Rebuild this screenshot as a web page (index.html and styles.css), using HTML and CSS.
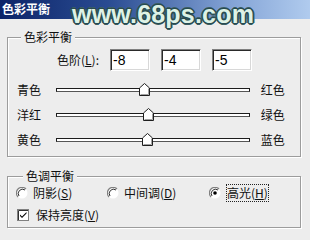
FILE: index.html
```html
<!DOCTYPE html>
<html>
<head>
    <title>色彩平衡</title>
    <meta charset="utf-8">
    <link rel="stylesheet" href="styles.css">
</head>
<body>

<div class="titlebar"><span class="title">色彩平衡</span></div>
<div class="watermark">www.68ps.com</div>

<div class="group balance">
    <span class="legend">色彩平衡</span>
    <div class="levels">
        <span class="levels-label">色阶(<u>L</u>):</span>
        <input class="field" type="text" value="-8">
        <input class="field" type="text" value="-4">
        <input class="field" type="text" value="-5">
    </div>
    <div class="slider-row">
        <span class="lbl">青色</span>
        <div class="track"><span class="thumb" style="--v:46%"><svg width="11" height="13" viewBox="0 0 11 13"><polygon points="5.5,0.5 10.5,5 10.5,12.5 0.5,12.5 0.5,5" fill="#fff" stroke="#1e1e1e"/><polyline points="9.5,5.5 9.5,11.5 1.5,11.5" fill="none" stroke="#a0a0a0"/></svg></span></div>
        <span class="lbl right">红色</span>
    </div>
    <div class="slider-row">
        <span class="lbl">洋红</span>
        <div class="track"><span class="thumb" style="--v:48%"><svg width="11" height="13" viewBox="0 0 11 13"><polygon points="5.5,0.5 10.5,5 10.5,12.5 0.5,12.5 0.5,5" fill="#fff" stroke="#1e1e1e"/><polyline points="9.5,5.5 9.5,11.5 1.5,11.5" fill="none" stroke="#a0a0a0"/></svg></span></div>
        <span class="lbl right">绿色</span>
    </div>
    <div class="slider-row">
        <span class="lbl">黄色</span>
        <div class="track"><span class="thumb" style="--v:47.5%"><svg width="11" height="13" viewBox="0 0 11 13"><polygon points="5.5,0.5 10.5,5 10.5,12.5 0.5,12.5 0.5,5" fill="#fff" stroke="#1e1e1e"/><polyline points="9.5,5.5 9.5,11.5 1.5,11.5" fill="none" stroke="#a0a0a0"/></svg></span></div>
        <span class="lbl right">蓝色</span>
    </div>
</div>

<div class="group tone">
    <span class="legend">色调平衡</span>
    <div class="radios">
        <label class="radio">
            <svg width="12" height="12" viewBox="0 0 12 12"><circle cx="6" cy="6" r="5.5" fill="#fff"/><path d="M10 2 A5.5 5.5 0 0 0 2 10" fill="none" stroke="#808080" stroke-width="1.2"/><path d="M9 3 A4.3 4.3 0 0 0 3 9" fill="none" stroke="#303030" stroke-width="1"/></svg>
            <span>阴影(<u>S</u>)</span>
        </label>
        <label class="radio">
            <svg width="12" height="12" viewBox="0 0 12 12"><circle cx="6" cy="6" r="5.5" fill="#fff"/><path d="M10 2 A5.5 5.5 0 0 0 2 10" fill="none" stroke="#808080" stroke-width="1.2"/><path d="M9 3 A4.3 4.3 0 0 0 3 9" fill="none" stroke="#303030" stroke-width="1"/></svg>
            <span>中间调(<u>D</u>)</span>
        </label>
        <label class="radio">
            <svg width="12" height="12" viewBox="0 0 12 12"><circle cx="6" cy="6" r="5.5" fill="#fff"/><path d="M10 2 A5.5 5.5 0 0 0 2 10" fill="none" stroke="#808080" stroke-width="1.2"/><path d="M9 3 A4.3 4.3 0 0 0 3 9" fill="none" stroke="#303030" stroke-width="1"/><circle cx="6" cy="6" r="1.8" fill="#000"/></svg>
            <span class="focus">高光(<u>H</u>)</span>
        </label>
    </div>
    <label class="check">
        <svg width="12" height="12" viewBox="0 0 12 12"><rect x="0.5" y="0.5" width="11" height="11" fill="#fff" stroke="#808080"/><path d="M1.5 11 V1.5 H11" fill="none" stroke="#303030"/><path d="M3 5.5 L5 7.5 L9.5 3 L9.5 4.5 L5 9 L3 7 Z" fill="#000"/></svg>
        <span>保持亮度(<u>V</u>)</span>
    </label>
</div>

</body>
</html>
```

FILE: styles.css
```css
body,html {
    margin: 0; padding: 0;
}
body {
    background: #ededed;
    font-family: "Noto Sans CJK SC", sans-serif;
    font-size: 12px;
    line-height: 16px;
    color: #111;
    position: relative;
    width: 310px;
    height: 240px;
    overflow: hidden;
}
u {
    text-decoration: underline;
    text-underline-offset: 1px;
}
.titlebar {
    height: 19px;
    background: linear-gradient(to right, #0c2468 0%, #2a4c92 35%, #84a4d6 75%, #b0cbee 100%);
    padding-left: 2px;
}
.titlebar > .title {
    color: #fff;
    font-weight: bold;
    line-height: 18px;
    letter-spacing: 0;
}
.watermark {
    position: absolute;
    left: 72px;
    top: 0px;
    font-family: "Liberation Sans", sans-serif;
    font-weight: bold;
    font-size: 25px;
    line-height: 28px;
    letter-spacing: 0.2px;
    color: #def2e6;
    text-shadow:
        -1px -1px 0 #284a50, 1px -1px 0 #284a50,
        -1px 1px 0 #284a50, 1px 1px 0 #284a50,
        0 -2px 0 #3a5e62, 0 2px 0 #3a5e62,
        -2px 0 0 #3a5e62, 2px 0 0 #3a5e62;
}
.group {
    position: relative;
    margin-left: 7px;
    width: 292px;
    border: 1px solid #9c9c9c;
    box-shadow: 1px 1px 0 #fff, inset 1px 1px 0 #fff;
}
.group > .legend {
    position: absolute;
    top: -9px;
    background: #ededed;
    padding: 0 3px;
}
.balance {
    margin-top: 18px;
    padding: 11px 0 4px;
}
.balance > .legend {
    left: 13px;
}
.levels {
    display: flex;
    align-items: center;
    gap: 11px;
    margin-left: 49px;
    height: 22px;
}
.levels > .levels-label {
    width: 42px;
}
.field {
    box-sizing: border-box;
    width: 40px;
    height: 22px;
    margin: 0;
    padding: 0 0 0 2px;
    border: 1px solid;
    border-color: #808080 #fff #fff #808080;
    box-shadow: inset 1px 1px 0 #2a2a2a, inset -1px -1px 0 #d8d8d8;
    background: #fff;
    font-family: "Liberation Sans", sans-serif;
    font-size: 14px;
    color: #000;
    outline: 0 none;
}
.slider-row {
    display: flex;
    align-items: center;
    height: 25px;
    margin-top: 0;
    padding-left: 9px;
}
.balance > .levels + .slider-row {
    margin-top: 6px;
}
.slider-row > .lbl {
    width: 40px;
}
.slider-row > .lbl.right {
    margin-left: 11px;
}
.track {
    position: relative;
    box-sizing: border-box;
    width: 197px;
    height: 4px;
    background: #fff;
    border: 1px solid #1c1c1c;
    border-bottom-color: #555;
}
.thumb {
    position: absolute;
    left: calc(var(--v) - 6px);
    top: -6px;
    width: 11px;
    height: 13px;
}
.thumb > svg {
    display: block;
}
.tone {
    margin-top: 19px;
    padding: 8px 0 4px;
}
.tone > .legend {
    left: 15px;
}
.radios {
    display: grid;
    grid-template-columns: 91px 102px auto;
    padding-left: 8px;
    height: 16px;
}
.radio, .check {
    display: flex;
    align-items: center;
    gap: 5px;
}
.radio > svg, .check > svg {
    flex: none;
}
.radio > .focus {
    outline: 1px dotted #222;
    outline-offset: 0;
    margin-left: 1px;
}
.check {
    margin-top: 6px;
    padding-left: 9px;
    height: 16px;
    gap: 7px;
}
```
